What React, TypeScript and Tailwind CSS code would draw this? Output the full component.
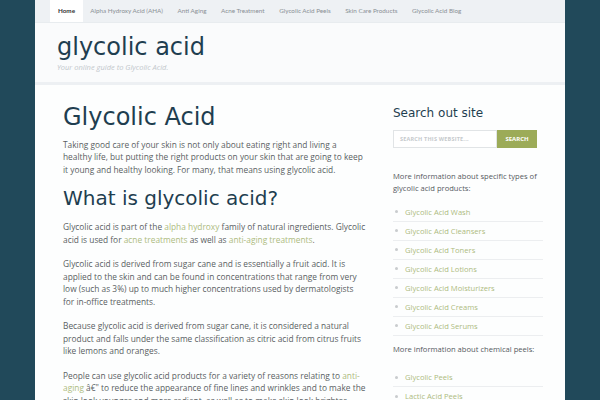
const navItems = [
  "Home",
  "Alpha Hydroxy Acid (AHA)",
  "Anti Aging",
  "Acne Treatment",
  "Glycolic Acid Peels",
  "Skin Care Products",
  "Glycolic Acid Blog",
];

const productLinks = [
  "Glycolic Acid Wash",
  "Glycolic Acid Cleansers",
  "Glycolic Acid Toners",
  "Glycolic Acid Lotions",
  "Glycolic Acid Moisturizers",
  "Glycolic Acid Creams",
  "Glycolic Acid Serums",
];

const peelLinks = ["Glycolic Peels", "Lactic Acid Peels"];

function Link({ children }: { children: React.ReactNode }) {
  return <a className="text-[#adbb7f]">{children}</a>;
}

function LinkList({ items }: { items: string[] }) {
  return (
    <ul className="mb-[7px]">
      {items.map((item) => (
        <li
          key={item}
          className="flex items-center h-[19px] border-b border-[#eceef0] pl-[2px]"
        >
          <span className="w-[3px] h-[3px] rounded-full bg-[#c9ccce] mr-[7px]" />
          <span className="text-[#adbb7f]">{item}</span>
        </li>
      ))}
    </ul>
  );
}

export default function App() {
  return (
    <div
      className="min-h-screen bg-[#21495a] text-[#5a5f63]"
      style={{ fontFamily: "'Open Sans', Lato, sans-serif" }}
    >
      <div className="w-[530px] mx-auto">
        {/* NAV */}
        <nav
          className="h-[22px] bg-[#eef1f4] flex pl-[15px] text-[6.3px]"
          style={{ fontFamily: "Lato, sans-serif" }}
        >
          {navItems.map((item, i) => (
            <a
              key={item}
              className={
                i === 0
                  ? "flex items-center px-[8px] bg-white text-[#333] font-bold"
                  : "flex items-center px-[7.3px] text-[#8a9095]"
              }
            >
              {item}
            </a>
          ))}
        </nav>

        {/* HEADER */}
        <header className="h-[60px] bg-[#fafbfc] pl-[22px] pt-[10px] border-t border-[#e8ecef]">
          <div
            className="text-[24px] leading-[28px] text-[#1f3e50]"
            style={{ fontFamily: "'DejaVu Sans', sans-serif" }}
          >
            glycolic acid
          </div>
          <div className="text-[7.5px] italic text-[#c3c8cc] mt-[1px]">
            Your online guide to Glycolic Acid.
          </div>
        </header>
        <div className="h-[3px] bg-[#edf0f3]" />

        {/* MAIN */}
        <div className="bg-[#fdfefe] flex pl-[28px] pb-[20px] text-[8.35px] leading-[12.4px]">
          <main className="w-[302px] pt-[17px] whitespace-nowrap">
            <h1
              className="text-[24px] leading-[30px] text-[#1f3e50] mb-[7px]"
              style={{ fontFamily: "'DejaVu Sans', sans-serif" }}
            >
              Glycolic Acid
            </h1>
            <p>
              Taking good care of your skin is not only about eating right and living a
              <br />
              healthy life, but putting the right products on your skin that are going to keep
              <br />
              it young and healthy looking. For many, that means using glycolic acid.
            </p>
            <h2
              className="text-[20px] leading-[26px] text-[#1f3e50] mt-[9px] mb-[10px]"
              style={{ fontFamily: "'DejaVu Sans', sans-serif" }}
            >
              What is glycolic acid?
            </h2>
            <p className="mb-[12.4px]">
              Glycolic acid is part of the <Link>alpha hydroxy</Link> family of natural
              ingredients. Glycolic
              <br />
              acid is used for <Link>acne treatments</Link> as well as{" "}
              <Link>anti-aging treatments</Link>.
            </p>
            <p className="mb-[12.4px]">
              Glycolic acid is derived from sugar cane and is essentially a fruit acid. It is
              <br />
              applied to the skin and can be found in concentrations that range from very
              <br />
              low (such as 3%) up to much higher concentrations used by dermatologists
              <br />
              for in-office treatments.
            </p>
            <p className="mb-[12.4px]">
              Because glycolic acid is derived from sugar cane, it is considered a natural
              <br />
              product and falls under the same classification as citric acid from citrus fruits
              <br />
              like lemons and oranges.
            </p>
            <p>
              People can use glycolic acid products for a variety of reasons relating to{" "}
              <Link>
                anti-
                <br />
                aging
              </Link>{" "}
              â€" to reduce the appearance of fine lines and wrinkles and to make the
              <br />
              skin look younger and more radiant, as well as to make skin look brighter.
            </p>
          </main>

          {/* SIDEBAR */}
          <aside className="w-[150px] ml-[28px] pt-[20px] text-[7.6px]">
            <h3
              className="text-[12px] leading-[16px] text-[#1f3e50] mb-[9px]"
              style={{ fontFamily: "'DejaVu Sans', sans-serif" }}
            >
              Search out site
            </h3>
            <div className="flex h-[18px] w-[144px]">
              <div className="flex-1 border border-[#e1e4e6] bg-white flex items-center pl-[6px] text-[5.5px] font-bold text-[#c6cacd] tracking-[0.2px]">
                SEARCH THIS WEBSITE...
              </div>
              <div className="w-[40px] bg-[#9cab58] text-white flex items-center justify-center text-[6px] font-bold">
                SEARCH
              </div>
            </div>
            <p className="mt-[22px] mb-[8px] text-[#555a5e]">
              More information about specific types of glycolic acid products:
            </p>
            <LinkList items={productLinks} />
            <p className="mb-[13px] text-[#555a5e]">More information about chemical peels:</p>
            <LinkList items={peelLinks} />
          </aside>
        </div>
      </div>
    </div>
  );
}
